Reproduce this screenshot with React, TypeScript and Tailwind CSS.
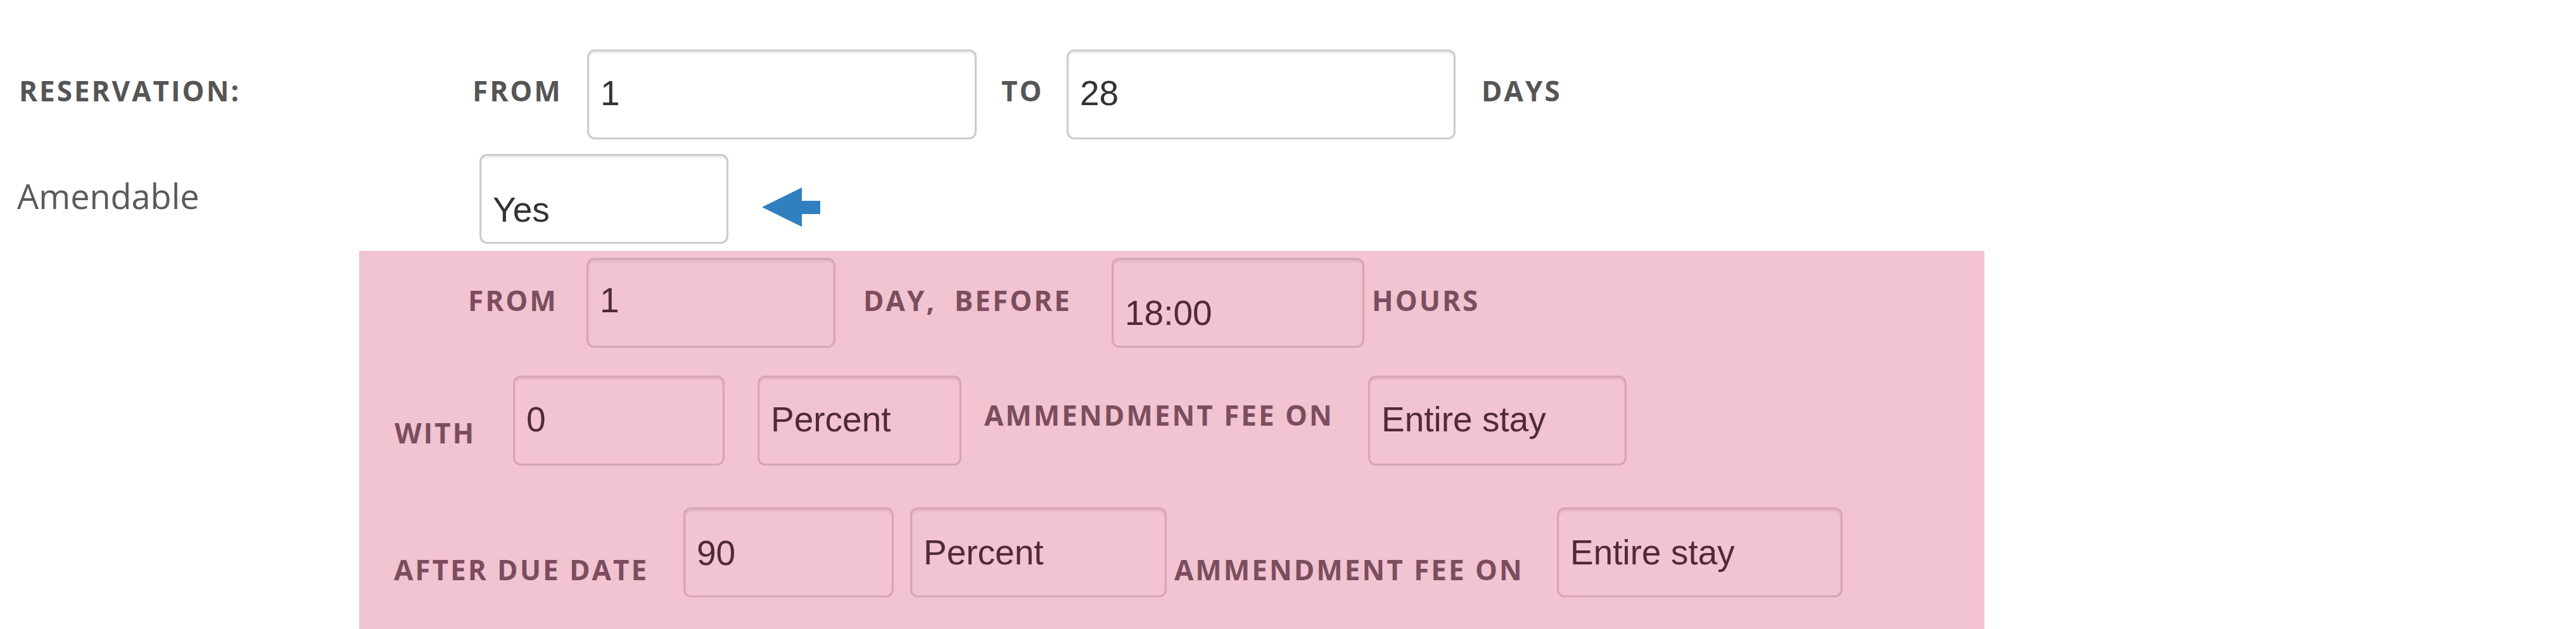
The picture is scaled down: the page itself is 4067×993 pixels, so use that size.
import React from 'react';

const label =
  "font-['Open_Sans',sans-serif] font-bold text-[44px] leading-none uppercase tracking-[3px] whitespace-nowrap";

interface FieldProps {
  className: string;
  pink?: boolean;
  children: React.ReactNode;
}

// fake bootstrap-ish input box, text pushed down with padding like the original
function Field({ className, pink, children }: FieldProps) {
  return (
    <div
      className={`shrink-0 h-[142px] rounded-[12px] border-[3px] pl-[18px] font-['Liberation_Sans',Arial,sans-serif] text-[55px] leading-none whitespace-nowrap shadow-[inset_0_3px_3px_rgba(0,0,0,0.08)] ${
        pink ? 'border-[#d7a5b4] text-[#4f2a38]' : 'border-[#cccccc] bg-white text-[#333333]'
      } ${className}`}
    >
      {children}
    </div>
  );
}

function Arrow() {
  return (
    <svg width="92" height="62" viewBox="0 0 92 62" className="shrink-0 ml-[53px] mt-[53px]">
      <polygon points="0,31 63,0 63,21 92,21 92,42 63,42 63,62" fill="#3080c0" />
    </svg>
  );
}

export default function App() {
  return (
    <div className="w-[4067px] min-h-[993px] bg-white pt-[78px] text-[#555555]">
      {/* reservation range */}
      <div className="flex items-start pl-[30px]">
        <div className={`${label} w-[716px] mt-[43px]`}>Reservation:</div>
        <div className={`${label} w-[136px] mt-[43px]`}>From</div>
        <Field className="ml-[45px] w-[615px] pt-[39px]">1</Field>
        <div className={`${label} ml-[39px] w-[58px] mt-[43px]`}>To</div>
        <Field className="ml-[45px] w-[614px] pt-[39px]">28</Field>
        <div className={`${label} ml-[41px] mt-[43px]`}>Days</div>
      </div>

      {/* amendable */}
      <div className="flex items-start pl-[27px] mt-[23px]">
        <div className="w-[730px] mt-[39px] font-['Open_Sans',sans-serif] text-[54px] leading-none text-[#5a5a5a]">
          Amendable
        </div>
        <Field className="w-[393px] pt-[58px] text-[#222222]">Yes</Field>
        <Arrow />
      </div>

      {/* amendment rules */}
      <div className="mt-[11px] ml-[567px] w-[2566px] bg-[#f2c3d0] pt-[11px] pb-[80px] text-[#7b4d5e]">
        <div className="flex items-start pl-[172px]">
          <div className={`${label} w-[144px] mt-[45px]`}>From</div>
          <Field pink className="ml-[43px] w-[393px] pt-[37px]">1</Field>
          <div className={`${label} ml-[44px] w-[335px] mt-[45px]`}>Day,&nbsp; Before</div>
          <Field pink className="ml-[57px] w-[399px] pt-[57px]">18:00</Field>
          <div className={`${label} ml-[12px] mt-[45px]`}>Hours</div>
        </div>

        <div className="flex items-start pl-[56px] mt-[44px]">
          <div className={`${label} w-[120px] mt-[68px]`}>With</div>
          <Field pink className="ml-[67px] w-[334px] pt-[39px]">0</Field>
          <Field pink className="ml-[52px] w-[322px] pt-[39px]">Percent</Field>
          <div className={`${label} ml-[36px] w-[546px] mt-[40px]`}>Ammendment fee on</div>
          <Field pink className="ml-[60px] w-[408px] pt-[39px]">Entire stay</Field>
        </div>

        <div className="flex items-start pl-[55px] mt-[66px]">
          <div className={`${label} w-[402px] mt-[76px]`}>After due date</div>
          <Field pink className="ml-[55px] w-[332px] pt-[42px]">90</Field>
          <Field pink className="ml-[26px] w-[405px] pt-[41px]">Percent</Field>
          <div className={`${label} ml-[12px] w-[547px] mt-[76px]`}>Ammendment fee on</div>
          <Field pink className="ml-[57px] w-[451px] pt-[41px]">Entire stay</Field>
        </div>
      </div>
    </div>
  );
}
